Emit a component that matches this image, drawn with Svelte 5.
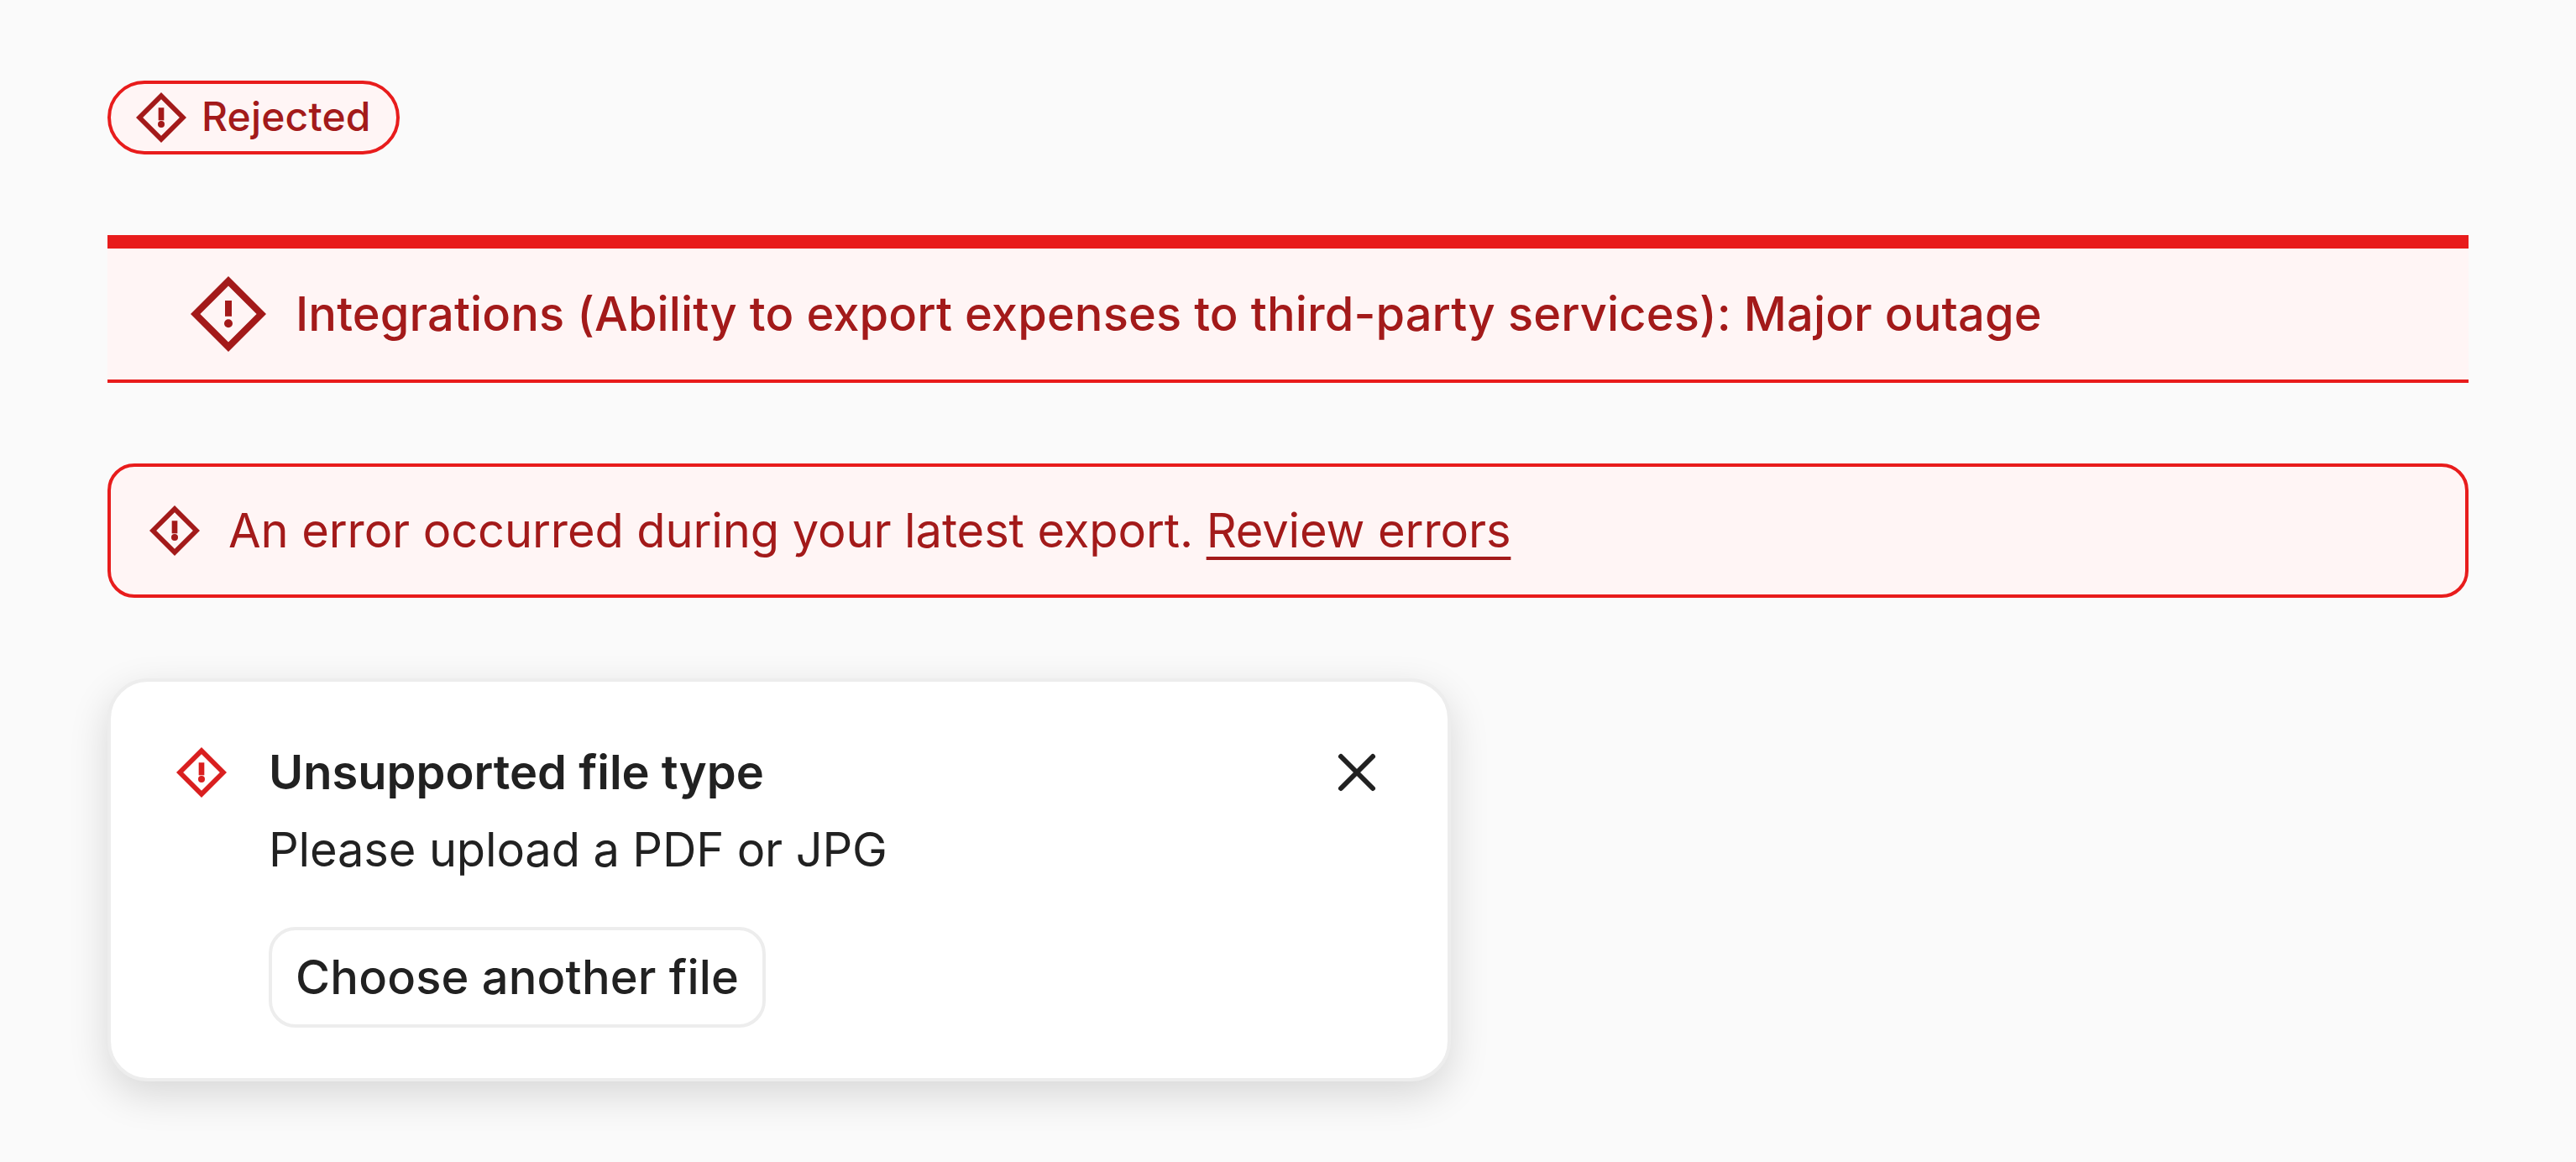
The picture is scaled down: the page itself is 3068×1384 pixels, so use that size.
<script>
  // the small icons use a heavier cut than the large one, same as the design
  const SMALL = { inner: 8.2, barX: 10.75, barY: 7.6, barW: 2.5, barH: 5.65, dotY: 15, dotR: 1.5 };
  const LARGE = { inner: 8.4, barX: 11, barY: 8, barW: 2, barH: 4.7, dotY: 14.8, dotR: 1.25 };

  function diamond(r) {
    return `M12 .75 23.25 12 12 23.25 .75 12ZM12 ${12 - r} ${12 - r} 12 12 ${12 + r} ${12 + r} 12Z`;
  }
</script>

{#snippet errorIcon(cut, cls)}
  <svg class="icon {cls}" viewBox="0 0 24 24" aria-hidden="true">
    <path fill-rule="evenodd" d={diamond(cut.inner)} />
    <rect x={cut.barX} y={cut.barY} width={cut.barW} height={cut.barH} />
    <circle cx="12" cy={cut.dotY} r={cut.dotR} />
  </svg>
{/snippet}

<main class="page">
  <div class="badge-row">
    <span class="badge">
      {@render errorIcon(SMALL, 'icon-sm')}
      <span class="badge-label">Rejected</span>
    </span>
  </div>

  <div class="banner" role="status">
    {@render errorIcon(LARGE, 'icon-lg')}
    <span>Integrations (Ability to export expenses to third-party services): Major outage</span>
  </div>

  <div class="alert" role="alert">
    {@render errorIcon(SMALL, 'icon-sm')}
    <p>An error occurred during your latest export. <a href="#errors">Review errors</a></p>
  </div>

  <div class="toast">
    <span class="toast-icon">{@render errorIcon(SMALL, 'icon-sm')}</span>
    <div class="toast-body">
      <div class="toast-title">Unsupported file type</div>
      <div class="toast-text">Please upload a PDF or JPG</div>
      <button class="toast-action" type="button">Choose another file</button>
    </div>
    <button class="toast-close" type="button" aria-label="Close">
      <svg viewBox="0 0 64 64" width="64" height="64" aria-hidden="true">
        <path d="M13 13 51 51M51 13 13 51" />
      </svg>
    </button>
  </div>
</main>

<style>
  :global(body) {
    margin: 0;
    background: #fafafa;
    font-family: Inter, "Liberation Sans", sans-serif;
  }

  .page {
    display: flex;
    flex-direction: column;
    gap: 96px;
    padding: 96px 128px;
  }

  .icon {
    display: block;
    flex-shrink: 0;
    fill: currentColor;
  }

  .icon-sm {
    width: 64px;
    height: 64px;
  }

  .icon-lg {
    width: 96px;
    height: 96px;
  }

  .badge-row {
    display: flex;
  }

  .badge {
    display: inline-flex;
    align-items: center;
    gap: 16px;
    width: 348px;
    height: 88px;
    box-sizing: border-box;
    padding: 0 28px;
    border: 4px solid #e81c1c;
    border-radius: 44px;
    background: #fff5f5;
    color: #a31a1a;
    font-size: 48px;
    font-weight: 500;
    letter-spacing: 0.15px;
  }

  .badge-label {
    padding-bottom: 3px;
  }

  .banner {
    display: flex;
    align-items: center;
    gap: 32px;
    height: 176px;
    box-sizing: border-box;
    padding: 0 96px;
    border-top: 16px solid #e81c1c;
    border-bottom: 4px solid #e81c1c;
    background: #fff5f5;
    color: #a31a1a;
    font-size: 56px;
    font-weight: 500;
    letter-spacing: 0.1px;
  }

  .alert {
    display: flex;
    align-items: center;
    gap: 32px;
    height: 160px;
    box-sizing: border-box;
    padding: 0 44px;
    border: 4px solid #e81c1c;
    border-radius: 32px;
    background: #fff5f5;
    color: #a31a1a;
    font-size: 56px;
    letter-spacing: -0.1px;
  }

  .alert p {
    margin: 0;
  }

  .alert a {
    color: inherit;
    text-decoration: underline;
    text-underline-offset: 11px;
    text-decoration-thickness: 4px;
  }

  .toast {
    display: grid;
    grid-template-columns: 64px 1fr 64px;
    column-gap: 48px;
    width: 1600px;
    height: 480px;
    box-sizing: border-box;
    padding: 62px 76px 60px;
    border: 4px solid #ededed;
    border-radius: 48px;
    background: #fff;
    box-shadow: 0 16px 48px rgba(0, 0, 0, 0.14);
    color: #212121;
    font-size: 56px;
  }

  .toast-icon {
    color: #d91f1f;
    padding-top: 14px;
  }

  .toast-title {
    font-weight: 600;
    line-height: 92px;
  }

  .toast-text {
    line-height: 92px;
    letter-spacing: -0.15px;
  }

  .toast-action {
    display: block;
    height: 120px;
    margin-top: 46px;
    padding: 0 28px;
    border: 4px solid #ededed;
    border-radius: 32px;
    background: #fff;
    color: inherit;
    font: inherit;
    font-weight: 500;
    letter-spacing: 0.19px;
  }

  .toast-close {
    width: 64px;
    height: 64px;
    margin-top: 14px;
    padding: 0;
    border: 0;
    background: none;
  }

  .toast-close svg {
    display: block;
    fill: none;
    stroke: #212121;
    stroke-width: 6;
    stroke-linecap: round;
  }
</style>
